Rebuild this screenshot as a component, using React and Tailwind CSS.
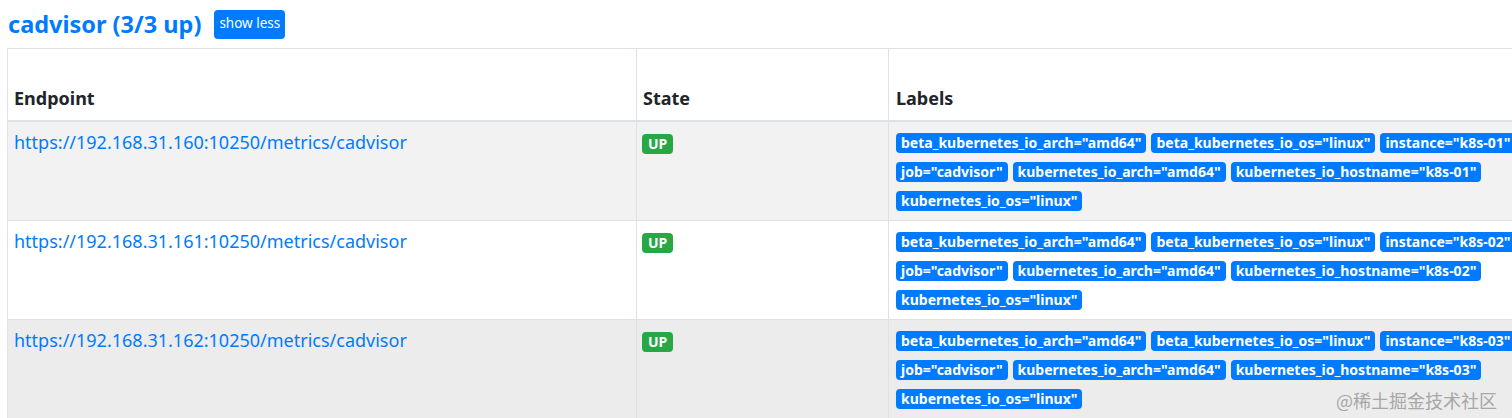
import React from "react";

const rows = [
  { ip: "192.168.31.160", host: "k8s-01", bg: "bg-[#f2f2f2]" },
  { ip: "192.168.31.161", host: "k8s-02", bg: "bg-white" },
  { ip: "192.168.31.162", host: "k8s-03", bg: "bg-[#ececec]" },
];

function Label({ children }) {
  return (
    <span className="inline-flex h-[20px] items-center rounded-[4px] bg-[#007bff] px-[5px] text-[14px] font-bold leading-none text-white whitespace-nowrap">
      {children}
    </span>
  );
}

export default function App() {
  return (
    <div className="relative h-[418px] w-[1512px] overflow-hidden bg-white font-['Noto_Sans',sans-serif] text-[#212529]">
      <div className="flex items-center gap-[13px] pl-[8px] pt-[6px]">
        <h2 className="text-[23.5px] font-bold leading-[36px] text-[#007bff]">cadvisor (3/3 up)</h2>
        <button className="h-[29px] rounded-[4px] bg-[#007bff] px-[5px] text-[13.5px] leading-none text-white">show less</button>
      </div>
      <table className="ml-[7px] mt-[6px] w-[1600px] border-collapse border border-[#dee2e6] table-fixed">
        <colgroup>
          <col className="w-[629px]" />
          <col className="w-[252px]" />
          <col />
        </colgroup>
        <thead>
          <tr className="h-[72px]">
            <th className="border-b-2 border-r border-[#dee2e6] px-[6px] pb-[8px] text-left align-bottom text-[18px] font-bold">Endpoint</th>
            <th className="border-b-2 border-r border-[#dee2e6] px-[6px] pb-[8px] text-left align-bottom text-[18px] font-bold">State</th>
            <th className="border-b-2 border-[#dee2e6] px-[7px] pb-[8px] text-left align-bottom text-[18px] font-bold">Labels</th>
          </tr>
        </thead>
        <tbody>
          {rows.map((r) => (
            <tr key={r.ip} className={r.bg}>
              <td className="border-b border-r border-[#dee2e6] px-[6px] pt-[7px] align-top">
                <a className="text-[18px] leading-[27px] text-[#007bff]" href="#">{`https://${r.ip}:10250/metrics/cadvisor`}</a>
              </td>
              <td className="border-b border-r border-[#dee2e6] px-[5px] pt-[12px] align-top">
                <div className="flex">
                  <span className="flex h-[20px] items-center rounded-[4px] bg-[#28a745] px-[6px] text-[14px] font-bold leading-none text-white">UP</span>
                </div>
              </td>
              <td className="border-b border-[#dee2e6] pl-[7px] pt-[11px] pb-[9px] align-top">
                <div className="flex flex-wrap gap-x-[5px] gap-y-[9px] w-[640px]">
                  <Label>beta_kubernetes_io_arch="amd64"</Label>
                  <Label>beta_kubernetes_io_os="linux"</Label>
                  <Label>{`instance="${r.host}"`}</Label>
                  <Label>job="cadvisor"</Label>
                  <Label>kubernetes_io_arch="amd64"</Label>
                  <Label>{`kubernetes_io_hostname="${r.host}"`}</Label>
                  <Label>kubernetes_io_os="linux"</Label>
                </div>
              </td>
            </tr>
          ))}
        </tbody>
      </table>
      <div className="absolute bottom-[4px] right-[15px] text-[18px] text-[#a0a0a0] opacity-90 font-['Noto_Sans_CJK_SC',sans-serif]">@稀土掘金技术社区</div>
    </div>
  );
}
